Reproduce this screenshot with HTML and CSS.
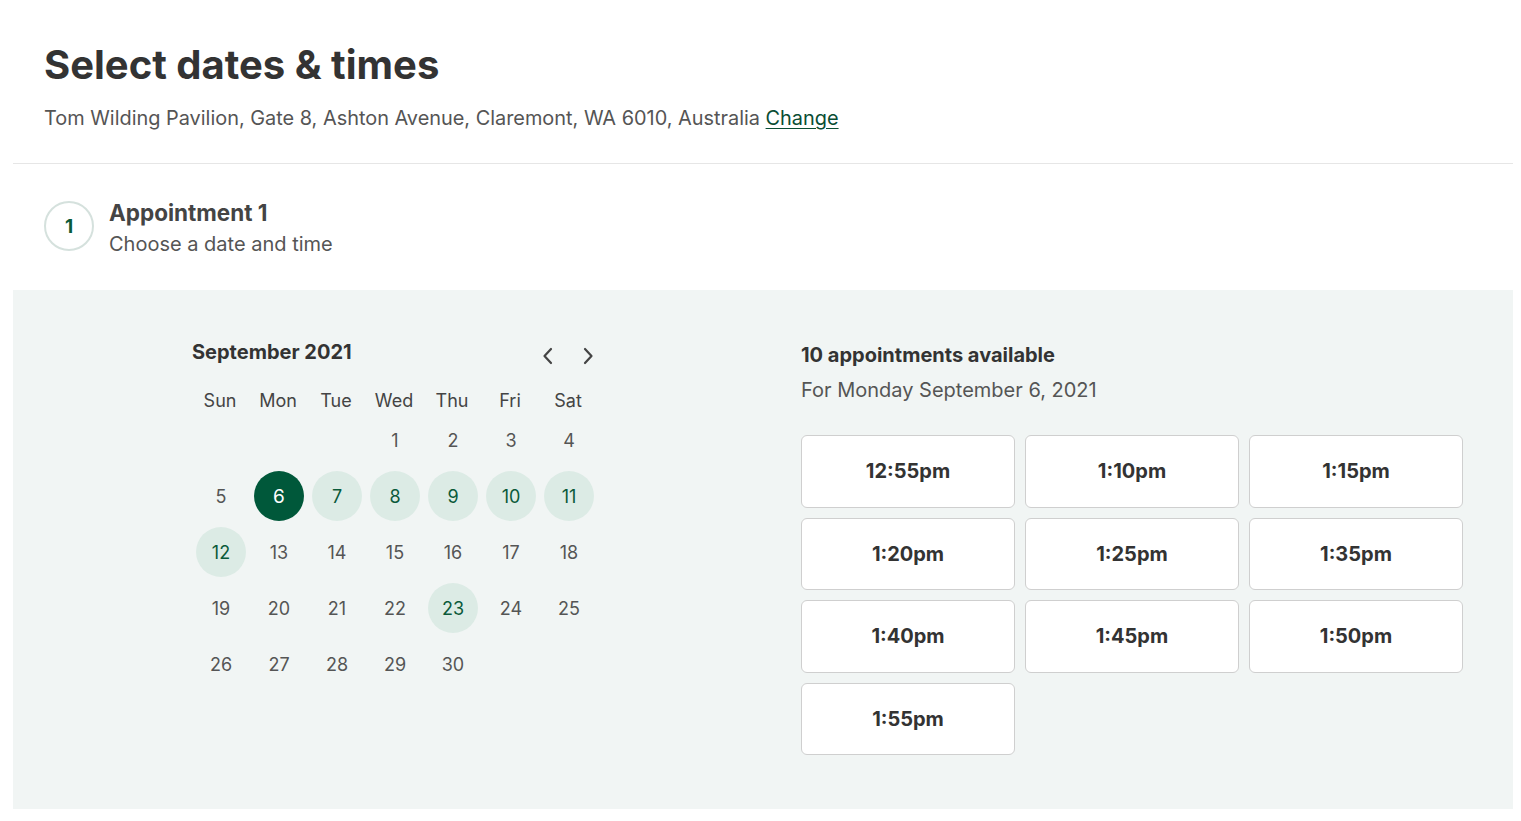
FILE: index.html
```html
<!DOCTYPE html>
<html lang="en">
<head>
<meta charset="utf-8">
<title>Select dates &amp; times</title>
<link rel="stylesheet" href="styles.css">
</head>
<body>
<div class="page">
  <header class="header">
    <h1 class="title">Select dates &amp; times</h1>
    <p class="address">Tom Wilding Pavilion, Gate 8, Ashton Avenue, Claremont, WA 6010, Australia <a class="change" href="#">Change</a></p>
  </header>
  <section class="step">
    <div class="step-num">1</div>
    <div class="step-text">
      <div class="step-title">Appointment 1</div>
      <div class="step-sub">Choose a date and time</div>
    </div>
  </section>
  <section class="panel">
    <div class="calendar">
      <div class="cal-head">
        <div class="month">September 2021</div>
        <div class="arrows">
          <button class="arrow" aria-label="Previous month"><svg width="14" height="20" viewBox="0 0 14 20"><path d="M10 3 L3.5 10 L10 17" fill="none" stroke="#444" stroke-width="2.2" stroke-linecap="round" stroke-linejoin="round"/></svg></button>
          <button class="arrow" aria-label="Next month"><svg width="14" height="20" viewBox="0 0 14 20"><path d="M4 3 L10.5 10 L4 17" fill="none" stroke="#444" stroke-width="2.2" stroke-linecap="round" stroke-linejoin="round"/></svg></button>
        </div>
      </div>
      <div class="grid">
        <div class="dow">Sun</div><div class="dow">Mon</div><div class="dow">Tue</div><div class="dow">Wed</div><div class="dow">Thu</div><div class="dow">Fri</div><div class="dow">Sat</div>
        <div class="day"></div><div class="day"></div><div class="day"></div>
        <div class="day"><span>1</span></div><div class="day"><span>2</span></div><div class="day"><span>3</span></div><div class="day"><span>4</span></div>
        <div class="day"><span>5</span></div><div class="day"><span class="sel">6</span></div><div class="day"><span class="avail">7</span></div><div class="day"><span class="avail">8</span></div><div class="day"><span class="avail">9</span></div><div class="day"><span class="avail">10</span></div><div class="day"><span class="avail">11</span></div>
        <div class="day"><span class="avail">12</span></div><div class="day"><span>13</span></div><div class="day"><span>14</span></div><div class="day"><span>15</span></div><div class="day"><span>16</span></div><div class="day"><span>17</span></div><div class="day"><span>18</span></div>
        <div class="day"><span>19</span></div><div class="day"><span>20</span></div><div class="day"><span>21</span></div><div class="day"><span>22</span></div><div class="day"><span class="avail">23</span></div><div class="day"><span>24</span></div><div class="day"><span>25</span></div>
        <div class="day"><span>26</span></div><div class="day"><span>27</span></div><div class="day"><span>28</span></div><div class="day"><span>29</span></div><div class="day"><span>30</span></div>
      </div>
    </div>
    <div class="times">
      <div class="times-title">10 appointments available</div>
      <div class="times-sub">For Monday September 6, 2021</div>
      <div class="slots">
        <button class="slot">12:55pm</button>
        <button class="slot">1:10pm</button>
        <button class="slot">1:15pm</button>
        <button class="slot">1:20pm</button>
        <button class="slot">1:25pm</button>
        <button class="slot">1:35pm</button>
        <button class="slot">1:40pm</button>
        <button class="slot">1:45pm</button>
        <button class="slot">1:50pm</button>
        <button class="slot">1:55pm</button>
      </div>
    </div>
  </section>
</div>
</body>
</html>
```
FILE: styles.css
```css
* { box-sizing: border-box; }
html, body { margin: 0; padding: 0; background: #fff; }
body {
  font-family: Inter, "Noto Sans", "Liberation Sans", sans-serif;
  color: #333;
}
.page { margin: 0 8px 0 13px; }
.header {
  padding: 41px 31px 31px;
  border-bottom: 1px solid #e6e6e6;
}
.title {
  margin: 0 0 15px;
  font-size: 40px;
  line-height: 48px;
  font-weight: 700;
  color: #333;
}
.address {
  margin: 0;
  font-size: 19.9px;
  line-height: 28px;
  color: #555;
}
.change { color: #0a4d33; text-decoration: underline; text-underline-offset: 3px; }
.step {
  display: flex;
  align-items: flex-start;
  gap: 15px;
  padding: 34px 31px 30px;
}
.step-num {
  width: 50px; height: 50px;
  margin-top: 3px;
  border: 2px solid #d5e1dd;
  border-radius: 50%;
  display: flex; align-items: center; justify-content: center;
  color: #0a5a3a;
  font-weight: 700;
  font-size: 19px;
}
.step-title { font-size: 22.5px; font-weight: 700; line-height: 30px; color: #444; }
.step-sub { font-size: 20px; line-height: 32px; color: #555; }
.panel {
  background: #f1f5f4;
  height: 519px;
  display: flex;
  padding: 47px 0 0 179px;
}
.calendar { width: 406px; }
.cal-head {
  display: flex; justify-content: space-between; align-items: center;
  height: 30px;
  padding-right: 1px;
}
.month { font-size: 20px; font-weight: 700; color: #333; }
.arrows { display: flex; gap: 22px; margin-top: 8px; }
.arrow { border: 0; background: none; padding: 0; width: 18px; height: 20px; display: flex; align-items: center; justify-content: center; cursor: pointer; }
.grid {
  display: grid;
  grid-template-columns: repeat(7, 58px);
  grid-template-rows: 24px;
  grid-auto-rows: 56px;
  margin-top: 21px;
}
.dow {
  display: flex; align-items: center; justify-content: center;
  font-size: 18px; color: #444;
  padding-right: 2px;
}
.day { display: flex; align-items: center; justify-content: center; }
.day span {
  width: 50px; height: 50px; border-radius: 50%;
  display: flex; align-items: center; justify-content: center;
  font-size: 18px; color: #555;
}
.day span.avail { background: #dcebe5; color: #0b5a3a; }
.day span.sel { background: #00583a; color: #fff; font-size: 19px; }
.times { margin-left: 203px; padding-top: 3px; }
.times-title { font-size: 20px; font-weight: 700; color: #333; line-height: 30px; }
.times-sub { font-size: 20px; color: #555; line-height: 30px; margin-top: 5px; }
.slots {
  margin-top: 30px;
  display: grid;
  grid-template-columns: repeat(3, 214px);
  grid-auto-rows: 72.5px;
  column-gap: 10px;
  row-gap: 10px;
}
.slot {
  background: #fff;
  border: 1px solid #cfcfcf;
  border-radius: 6px;
  font-family: inherit;
  font-size: 20px;
  font-weight: 700;
  color: #333;
  cursor: pointer;
}
```
